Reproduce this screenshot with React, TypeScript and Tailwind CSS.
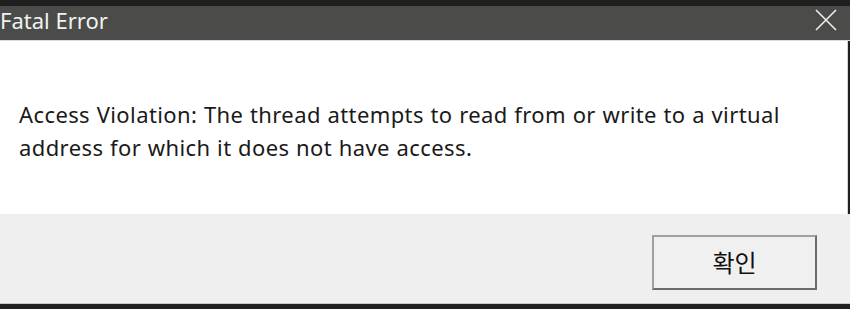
export default function App() {
  return (
    <div className="w-[850px] h-[309px] flex flex-col bg-[#1f1f1f] overflow-hidden font-['Noto_Sans','Noto_Sans_CJK_KR',sans-serif]">
      <div className="h-[6px] shrink-0 bg-[#1f1f1f]" />

      {/* title bar */}
      <div className="h-[35px] shrink-0 flex items-center justify-between bg-[#4b4b49] border-b border-[#dcdcdc]">
        <span className="text-[22px] leading-none text-[#f2f2f2] ml-0 -mt-[7px]">Fatal Error</span>
        <svg width="22" height="22" viewBox="0 0 22 22" className="mr-[13px] -mt-[7px]">
          <path d="M1 1 L21 21 M21 1 L1 21" stroke="#ededed" strokeWidth="1.6" />
        </svg>
      </div>

      {/* message */}
      <div className="h-[173px] shrink-0 bg-white border-r border-[#d4d4d4] mr-[2px] pl-[19px] pt-[57px]">
        <p className="text-[22px] leading-[33px] text-[#1a1a1a] tracking-[0.4px] [word-spacing:0.5px]">
          Access Violation: The thread attempts to read from or write to a virtual
          <br />
          address for which it does not have access.
        </p>
      </div>

      {/* footer */}
      <div className="h-[90px] shrink-0 bg-[#efefef] border-b border-[#c8c8c8] flex items-start justify-end pr-[33px] pt-[21px]">
        <button className="w-[165px] h-[55px] bg-[#f0f0f0] border-2 border-t-[#a0a0a0] border-l-[#a0a0a0] border-r-[#6b6b6b] border-b-[#6b6b6b] text-[24px] leading-none text-[#111] flex items-center justify-center">
          확인
        </button>
      </div>
    </div>
  );
}
